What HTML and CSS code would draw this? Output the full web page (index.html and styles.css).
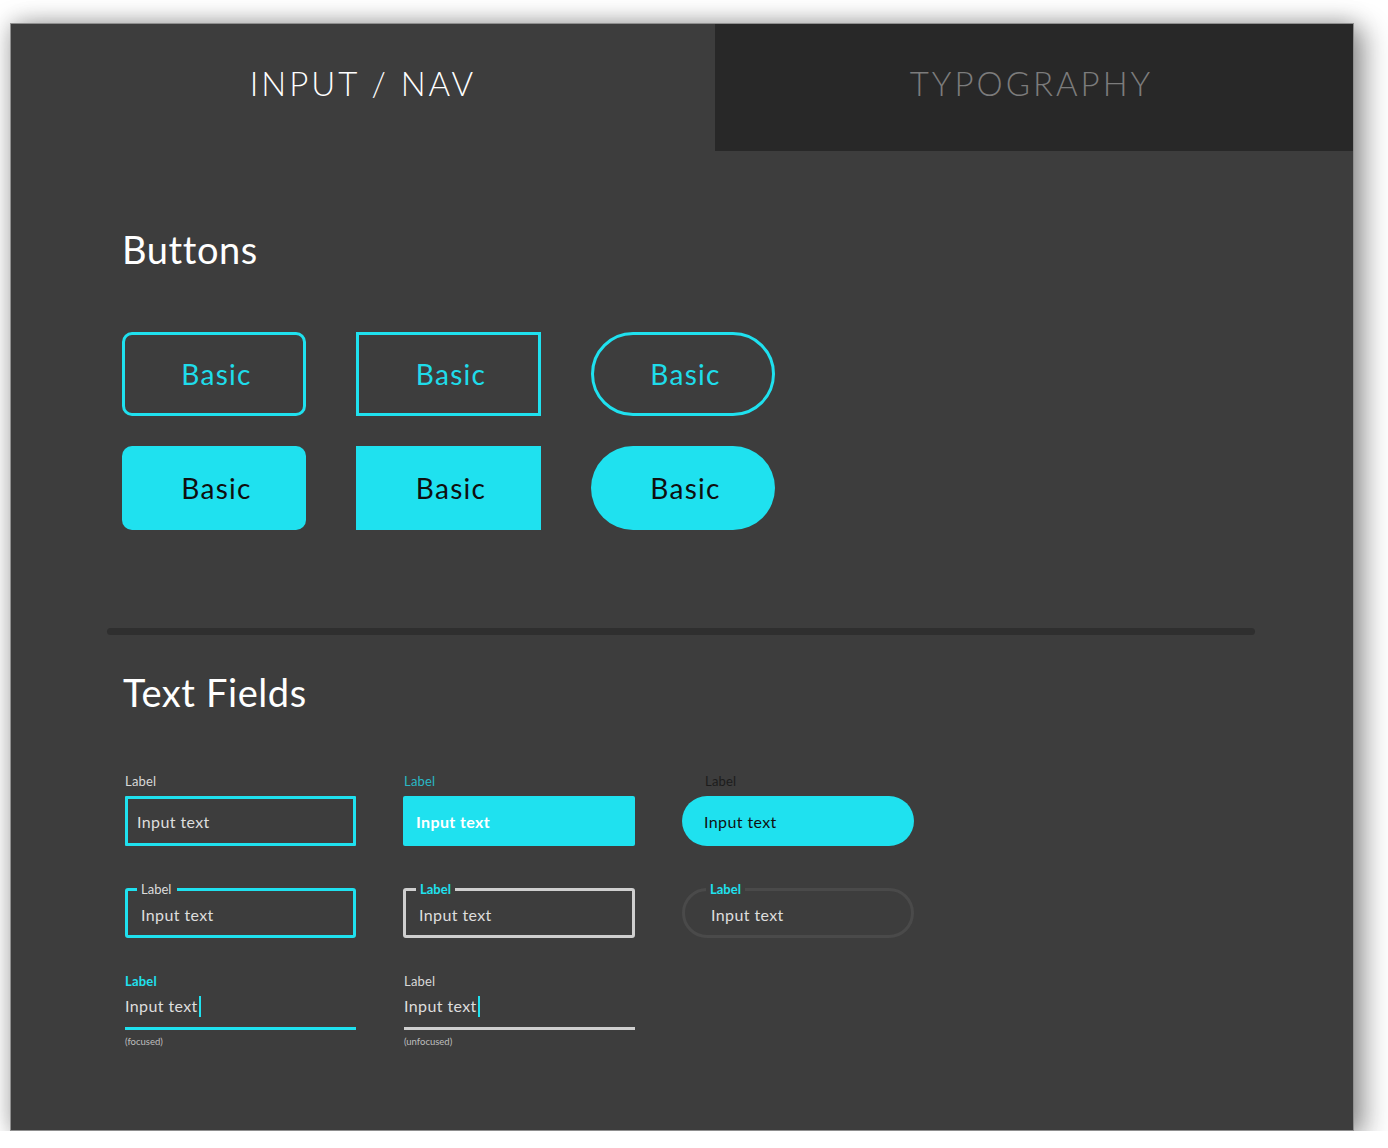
FILE: index.html
```html
<!DOCTYPE html>
<html lang="en">
<head>
<meta charset="utf-8">
<title>Input / Nav</title>
<link rel="stylesheet" href="styles.css">
</head>
<body>
<main class="panel">
  <nav class="tabs">
    <a class="tab tab-active">INPUT / NAV</a>
    <a class="tab tab-inactive">TYPOGRAPHY</a>
  </nav>
  <div class="content">
    <section class="section">
      <h2 class="heading heading-buttons">Buttons</h2>
      <div class="button-grid">
        <button class="btn btn-outline btn-rounded">Basic</button>
        <button class="btn btn-outline btn-square">Basic</button>
        <button class="btn btn-outline btn-pill">Basic</button>
        <button class="btn btn-filled btn-rounded">Basic</button>
        <button class="btn btn-filled btn-square">Basic</button>
        <button class="btn btn-filled btn-pill">Basic</button>
      </div>
    </section>

    <hr class="divider">

    <section class="section">
      <h2 class="heading heading-fields">Text Fields</h2>

      <div class="field-row row-top">
        <div class="field">
          <span class="label label-light">Label</span>
          <div class="box box-outline-cyan"><span class="value">Input text</span></div>
        </div>
        <div class="field">
          <span class="label label-cyan-dim">Label</span>
          <div class="box box-filled"><span class="value value-bold">Input text</span></div>
        </div>
        <div class="field">
          <span class="label label-dark label-pill">Label</span>
          <div class="box box-filled-pill"><span class="value value-dark">Input text</span></div>
        </div>
      </div>

      <div class="field-row row-notched">
        <div class="notched notched-cyan">
          <span class="notch-label notch-light">Label</span>
          <span class="value">Input text</span>
        </div>
        <div class="notched notched-gray">
          <span class="notch-label notch-cyan">Label</span>
          <span class="value">Input text</span>
        </div>
        <div class="notched notched-pill">
          <span class="notch-label notch-cyan">Label</span>
          <span class="value">Input text</span>
        </div>
      </div>

      <div class="field-row row-underline">
        <div class="uline">
          <span class="label label-bold-cyan">Label</span>
          <div class="uline-input"><span class="value">Input text</span><span class="caret"></span></div>
          <div class="uline-bar bar-cyan"></div>
          <span class="helper">(focused)</span>
        </div>
        <div class="uline uline-second">
          <span class="label label-light">Label</span>
          <div class="uline-input"><span class="value">Input text</span><span class="caret"></span></div>
          <div class="uline-bar bar-gray"></div>
          <span class="helper">(unfocused)</span>
        </div>
      </div>
    </section>
  </div>
</main>
</body>
</html>
```

FILE: styles.css
```css
* { box-sizing: border-box; }

body {
  margin: 0;
  padding: 23px 0 0 10px;
  background: #ffffff;
  font-family: Lato, "Noto Sans", "Liberation Sans", sans-serif;
}

.panel {
  width: 1344px;
  height: 1108px;
  background: #3d3d3d;
  border: 1px solid #8f8f8f;
  box-shadow: 0 0 22px rgba(0, 0, 0, 0.28), 12px 6px 26px rgba(0, 0, 0, 0.32);
  display: flex;
  flex-direction: column;
}

/* Tabs */
.tabs {
  display: flex;
  height: 127px;
}

.tab {
  display: flex;
  align-items: center;
  justify-content: center;
  padding-bottom: 9px;
  font-size: 33px;
  font-weight: 300;
  letter-spacing: 3px;
  text-decoration: none;
}

.tab-active {
  width: 704px;
  color: #ffffff;
  background: #3d3d3d;
}

.tab-inactive {
  flex: 1;
  color: #7c7c7c;
  background: #282828;
  padding-right: 5px;
}

/* Content */
.content {
  padding-left: 96px;
}

.heading {
  margin: 0 0 0 15px;
  font-size: 38px;
  line-height: 38px;
  font-weight: 400;
  letter-spacing: 0.6px;
  color: #ffffff;
}

.heading-buttons { margin-top: 79px; }
.heading-fields { margin-top: 38px; margin-left: 16px; }

/* Buttons */
.button-grid {
  margin: 64px 0 0 15px;
  display: grid;
  grid-template-columns: 184px 185px 184px;
  grid-auto-rows: 84px;
  column-gap: 50px;
  row-gap: 30px;
}

.btn {
  display: flex;
  align-items: center;
  justify-content: center;
  font-family: inherit;
  font-size: 28px;
  font-weight: 400;
  letter-spacing: 1.3px;
  padding: 0 0 0 5px;
  margin: 0;
}

.btn-outline {
  background: transparent;
  border: 3px solid #1fe1ef;
  color: #1fdcea;
}

.btn-filled {
  background: #1fe1ef;
  border: none;
  color: #0f0f0f;
}

.btn-rounded { border-radius: 10px; }
.btn-square { border-radius: 0; }
.btn-pill { border-radius: 42px; }

/* Divider */
.divider {
  margin: 98px 0 0 0;
  width: 1148px;
  height: 7px;
  border: none;
  border-radius: 4px;
  background: #2f2f2f;
}

/* Text fields */
.field-row {
  margin-left: 18px;
  display: grid;
  grid-template-columns: 231px 232px 232px;
  column-gap: 47px;
}

.row-top { margin-top: 62px; }
.row-notched { margin-top: 42px; }
.row-underline { margin-top: 35px; }

.field {
  display: flex;
  flex-direction: column;
}

.label {
  display: block;
  font-size: 13px;
  line-height: 16px;
  letter-spacing: 0.2px;
}

.label-light { color: #d8d8d8; }
.label-cyan-dim { color: #29b8c5; padding-left: 1px; }
.label-dark { color: #1c1c1c; }
.label-pill { padding-left: 23px; }
.label-bold-cyan { color: #1fe1ef; font-weight: 700; }

.value {
  font-size: 16px;
  line-height: 20px;
  letter-spacing: 0.4px;
  color: #dedede;
}

.value-bold { font-weight: 700; color: #ffffff; }
.value-dark { color: #111111; }

.box {
  margin-top: 7px;
  height: 50px;
  display: flex;
  align-items: center;
  padding-top: 2px;
}

.box-outline-cyan {
  border: 3px solid #1fe1ef;
  border-radius: 1px;
  padding-left: 9px;
}

.box-filled {
  background: #1fe1ef;
  border-radius: 2px;
  padding-left: 13px;
}

.box-filled-pill {
  background: #1fe1ef;
  border-radius: 25px;
  padding-left: 22px;
}

/* Notched fields */
.notched {
  position: relative;
  height: 50px;
  display: flex;
  align-items: center;
  padding: 3px 0 0 13px;
  border: 3px solid;
}

.notched-cyan { border-color: #1fe1ef; border-radius: 3px; }
.notched-gray { border-color: #cfcfcf; border-radius: 3px; }
.notched-pill { border-color: #4a4a4a; border-radius: 25px; padding-left: 26px; }

.notch-label {
  position: absolute;
  top: -10px;
  left: 9px;
  padding: 0 6px 0 4px;
  background: #3d3d3d;
  font-size: 13px;
  line-height: 16px;
}

.notched-gray .notch-label { left: 10px; padding-right: 4px; }
.notched-pill .notch-label { left: 21px; padding-right: 4px; }

.notch-light { color: #dcdcdc; }
.notch-cyan { color: #1fe1ef; font-weight: 700; }

/* Underline fields */
.uline {
  display: flex;
  flex-direction: column;
}

.uline-second { margin-left: 1px; }

.uline-input {
  margin-top: 7px;
  height: 20px;
  display: flex;
  align-items: center;
}

.caret {
  display: inline-block;
  width: 2px;
  height: 21px;
  margin-left: 1px;
  background: #1fe1ef;
}

.uline-bar {
  margin-top: 11px;
  height: 3px;
}

.bar-cyan { background: #1fe1ef; }
.bar-gray { background: #cfcfcf; }

.helper {
  margin-top: 6px;
  font-size: 9.5px;
  line-height: 12px;
  color: #bdbdbd;
}
```
